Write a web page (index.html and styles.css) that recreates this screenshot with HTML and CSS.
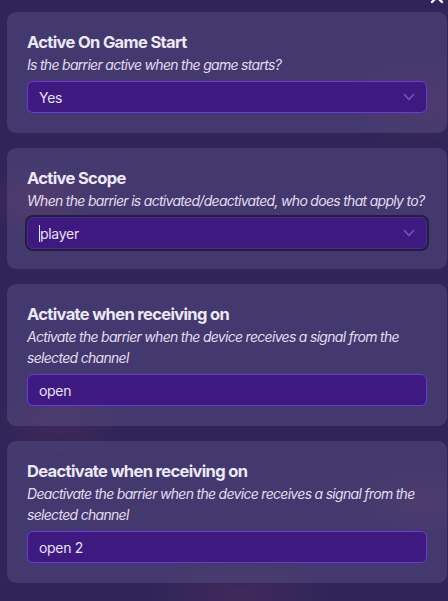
FILE: index.html
```html
<!DOCTYPE html>
<html>
<head>
<meta charset="utf-8">
<link rel="stylesheet" href="styles.css">
</head>
<body>
<div class="page">
  <svg class="close" width="16" height="16" viewBox="0 0 16 16"><path d="M3 3 L13 13 M13 3 L3 13" stroke="#ffffff" stroke-width="2.4" stroke-linecap="round"/></svg>
  <div class="list">
    <section class="card">
      <h2 class="title">Active On Game Start</h2>
      <p class="desc">Is the barrier active when the game starts?</p>
      <div class="field select">
        <span class="value">Yes</span>
        <svg class="chev" width="12" height="8" viewBox="0 0 12 8"><path d="M1 1 L6 6.5 L11 1" fill="none" stroke="#7a5bbf" stroke-width="1.3"/></svg>
      </div>
    </section>
    <section class="card">
      <h2 class="title">Active Scope</h2>
      <p class="desc">When the barrier is activated/deactivated, who does that apply to?</p>
      <div class="field select focused">
        <span class="value"><span class="caret"></span>player</span>
        <svg class="chev" width="12" height="8" viewBox="0 0 12 8"><path d="M1 1 L6 6.5 L11 1" fill="none" stroke="#7a5bbf" stroke-width="1.3"/></svg>
      </div>
    </section>
    <section class="card">
      <h2 class="title">Activate when receiving on</h2>
      <p class="desc">Activate the barrier when the device receives a signal from the selected channel</p>
      <div class="field"><span class="value">open</span></div>
    </section>
    <section class="card">
      <h2 class="title">Deactivate when receiving on</h2>
      <p class="desc">Deactivate the barrier when the device receives a signal from the selected channel</p>
      <div class="field"><span class="value">open 2</span></div>
    </section>
  </div>
</div>
</body>
</html>
```
FILE: styles.css
```css
html, body {
  margin: 0;
  padding: 0;
}
body {
  width: 448px;
  height: 601px;
  overflow: hidden;
  font-family: Inter, "Noto Sans", sans-serif;
  background-color: #2f2558;
  background-image:
    radial-gradient(ellipse 60px 40px at 40px 200px, rgba(120, 50, 90, 0.35), transparent),
    radial-gradient(ellipse 80px 50px at 420px 100px, rgba(120, 50, 90, 0.25), transparent),
    radial-gradient(ellipse 70px 40px at 60px 420px, rgba(120, 50, 90, 0.25), transparent),
    radial-gradient(ellipse 90px 40px at 240px 595px, rgba(110, 50, 100, 0.3), transparent),
    radial-gradient(ellipse 60px 40px at 420px 500px, rgba(120, 50, 90, 0.25), transparent);
}
.page {
  position: relative;
  padding: 12px 1px 0 7px;
}
.close {
  position: absolute;
  top: -11px;
  right: 3px;
}
.list {
  display: flex;
  flex-direction: column;
  gap: 15px;
}
.card {
  background: rgba(95, 85, 140, 0.42);
  border-radius: 9px;
  padding: 20px 20px 20px 20px;
}
.title {
  margin: 0;
  font-size: 16.5px;
  line-height: 20px;
  font-weight: 700;
  color: #ece8f4;
  letter-spacing: -0.65px;
}
.desc {
  margin: 2px -14px 0 0;
  font-size: 14px;
  line-height: 21px;
  font-style: italic;
  color: #e2dcef;
  letter-spacing: -0.7px;
}
.field {
  margin-top: 6px;
  height: 30px;
  border: 1px solid #6a3ad6;
  border-radius: 6px;
  background: #3e1a80;
  display: flex;
  align-items: center;
  justify-content: space-between;
  padding: 0 11px 0 11px;
  box-sizing: content-box;
  width: 376px;
}
.value {
  font-size: 14px;
  color: #e6e0f2;
  display: flex;
  align-items: center;
  letter-spacing: -0.3px;
}
.focused {
  border-color: #4a2d90;
  box-shadow: 0 0 0 2px #241d3b;
}
.caret {
  display: inline-block;
  width: 1px;
  height: 17px;
  background: #e6e0f2;
}
```
